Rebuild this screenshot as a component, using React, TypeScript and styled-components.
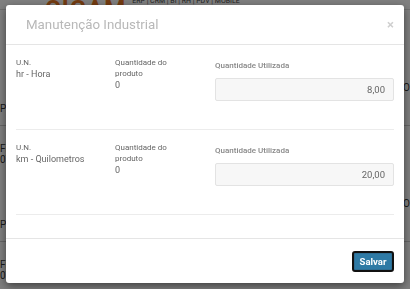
import * as React from 'react'
import styled, { createGlobalStyle } from 'styled-components'

const GlobalStyle = createGlobalStyle`
  html, body {
    margin: 0;
    padding: 0;
    width: 410px;
    height: 289px;
    overflow: hidden;
    font-family: Roboto, "Liberation Sans", Arial, sans-serif;
    background: #fff;
  }
  * { box-sizing: border-box; }
`

const items = [
  { un: 'hr - Hora', qtdProduto: '0', qtdUtilizada: '8,00' },
  { un: 'km - Quilometros', qtdProduto: '0', qtdUtilizada: '20,00' },
]

/* page behind the modal */
const Page = styled.div`
  width: 410px;
  height: 289px;
  background: #fff;
  overflow: hidden;
`
const TopBar = styled.div`
  height: 10px;
  display: flex;
  align-items: flex-end;
  gap: 6px;
  padding-left: 45px;
  overflow: hidden;
  border-bottom: 1px solid #ddd;
`
const Logo = styled.div`
  color: #e87722;
  font-size: 24px;
  font-weight: 700;
  letter-spacing: 1px;
  line-height: 20px;
  margin-bottom: -10px;
`
const Tagline = styled.div`
  color: #444;
  font-size: 7px;
  line-height: 9px;
  margin-bottom: 3px;
`
const ListRow = styled.div`
  height: 116px;
  display: flex;
  justify-content: space-between;
  border-bottom: 1px solid #ccc;
  font-size: 10px;
  color: #333;
`
const ListCell = styled.div<{ $top: number }>`
  padding-top: ${(p) => p.$top}px;
  line-height: 11px;
  display: flex;
  flex-direction: column;
  gap: 29px;
`

const Backdrop = styled.div`
  position: fixed;
  inset: 0;
  background: rgba(0, 0, 0, 0.5);
`

const Modal = styled.div`
  position: fixed;
  top: 5px;
  left: 6px;
  width: 398px;
  height: 278px;
  background: #fff;
  border-radius: 3px;
  box-shadow: 0 3px 9px rgba(0, 0, 0, 0.5);
  display: flex;
  flex-direction: column;
`
const Header = styled.div`
  height: 40px;
  flex: none;
  display: flex;
  align-items: center;
  justify-content: space-between;
  padding: 0 10px 0 20px;
  border-bottom: 1px solid #e5e5e5;
`
const Title = styled.h4`
  margin: 0;
  font-size: 13.3px;
  font-weight: 400;
  color: #b8b8b8;
`
const Close = styled.span`
  font-size: 13px;
  font-weight: 700;
  color: #cfcfcf;
  line-height: 1;
`
const Body = styled.div`
  flex: 1;
  padding: 0 10px;
`
const Item = styled.div`
  height: 85px;
  display: grid;
  grid-template-columns: 99px 100px 1fr;
  padding-top: 12px;
  border-bottom: 1px solid #ececec;
`
const Col = styled.div`
  display: flex;
  flex-direction: column;
`
const Label = styled.div`
  font-size: 8px;
  line-height: 11px;
  color: #666;
  max-width: 66px;
`
const Value = styled.div`
  font-size: 9px;
  line-height: 12px;
  color: #666;
`
const InputLabel = styled.div`
  font-size: 8px;
  font-weight: 500;
  line-height: 10px;
  color: #888;
  margin-top: 4px;
  margin-bottom: 7px;
`
const Input = styled.div`
  height: 23px;
  border: 1px solid #e3e3e3;
  border-radius: 2px;
  background: #f7f7f7;
  font-size: 9.5px;
  color: #666;
  display: flex;
  align-items: center;
  justify-content: flex-end;
  padding-right: 8px;
`
const Footer = styled.div`
  height: 45px;
  flex: none;
  border-top: 1px solid #e5e5e5;
  display: flex;
  justify-content: flex-end;
  align-items: flex-start;
  padding: 12px 10px 0 0;
`
const SaveButton = styled.button`
  width: 42px;
  height: 21px;
  padding: 0;
  border: 2px solid #111;
  border-radius: 3px;
  background: #2e7aa5;
  box-shadow: inset 0 0 0 1px #2e6d93;
  color: #fff;
  font-family: Roboto, "Liberation Sans", Arial, sans-serif;
  font-size: 9.5px;
  font-weight: 700;
`

export default function App() {
  return (
    <>
      <GlobalStyle />
      <Page>
        <TopBar>
          <Logo>CIGAM</Logo>
          <Tagline>ERP | CRM | BI | RH | PDV | MOBILE</Tagline>
        </TopBar>
        {[0, 1].map((i) => (
          <ListRow key={i}>
            <ListCell $top={93}>
              <span>Produto</span>
              <span>Fim<br />07/11</span>
            </ListCell>
            <ListCell $top={72}>
              <span>ATIVO</span>
            </ListCell>
          </ListRow>
        ))}
      </Page>
      <Backdrop />
      <Modal>
        <Header>
          <Title>Manutenção Industrial</Title>
          <Close>×</Close>
        </Header>
        <Body>
          {items.map((item, index) => (
            <Item key={index}>
              <Col>
                <Label>U.N.</Label>
                <Value>{item.un}</Value>
              </Col>
              <Col>
                <Label>Quantidade do produto</Label>
                <Value>{item.qtdProduto}</Value>
              </Col>
              <Col>
                <InputLabel>Quantidade Utilizada</InputLabel>
                <Input>{item.qtdUtilizada}</Input>
              </Col>
            </Item>
          ))}
        </Body>
        <Footer>
          <SaveButton>Salvar</SaveButton>
        </Footer>
      </Modal>
    </>
  )
}
